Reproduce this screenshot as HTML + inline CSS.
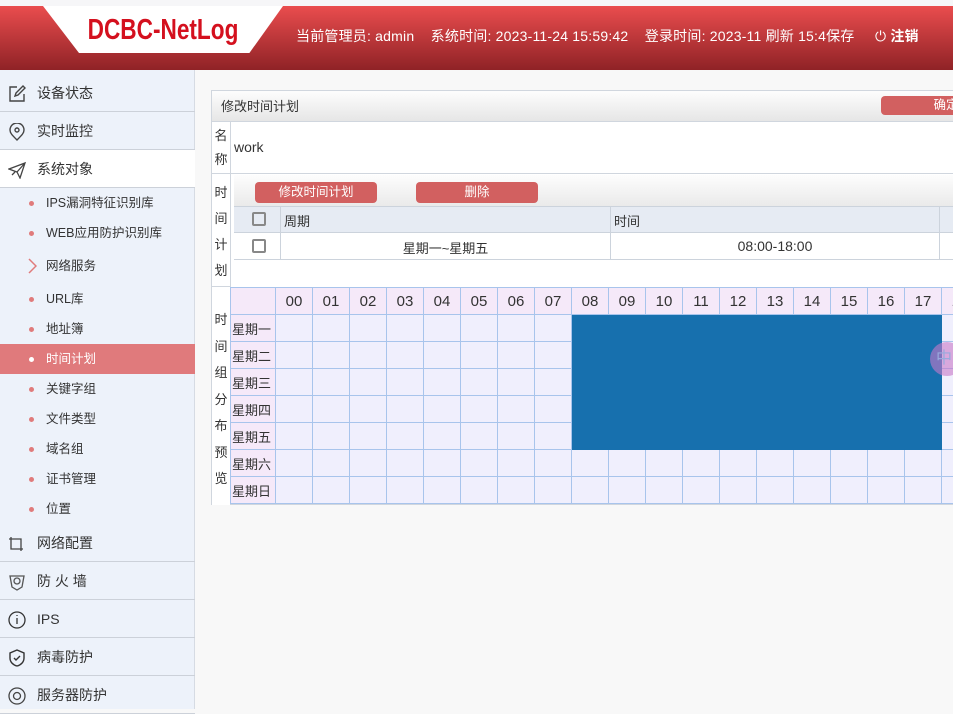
<!DOCTYPE html>
<html><head><meta charset="utf-8"><style>
*{margin:0;padding:0;box-sizing:border-box}
body{width:953px;height:709px;overflow:hidden;position:relative;background:#f8f8f8;font-family:"Liberation Sans","Noto Sans CJK SC",sans-serif;font-size:13px;color:#333}
.top{position:absolute;left:0;top:0;width:953px;height:6px;background:#f6f6f8}
.hdr{position:absolute;left:0;top:6px;width:953px;height:64px;background:linear-gradient(#ea4d4e,#8f2226)}
.logo{position:absolute;left:43px;top:0;width:240px;height:47px;background:#fff;clip-path:polygon(0 0,100% 0,86% 100%,15% 100%)}
.logo span{position:absolute;left:0;width:240px;top:9px;text-align:center;color:#d4101e;font-weight:bold;font-size:29px;line-height:30px;white-space:nowrap;transform:scaleX(.78);font-family:"Liberation Sans Narrow","Liberation Sans",sans-serif}
.hinfo{position:absolute;top:20px;left:296px;color:#fff;font-size:14px;white-space:nowrap;letter-spacing:.2px}
.side{position:absolute;left:0;top:70px;width:195px;height:639px;background:#edf2fa;border-right:1px solid #d6dbe3}
.m{position:absolute;left:0;width:195px;height:38px;border-bottom:1px solid #ccd1d9;font-size:14px;line-height:38px;padding-left:37px}
.m svg{position:absolute;left:8px;top:11px}
.s{position:absolute;left:0;width:195px;height:30px;line-height:30px;padding-left:46px;font-size:12.5px}
.s:before{content:"";position:absolute;left:29px;top:13px;width:5px;height:5px;border-radius:50%;background:#e07b7b}
.s.act{background:#e07a7c;color:#fff}
.s.act:before{background:#fff}
.s.nd:before{display:none}
.panel{position:absolute;left:211px;top:90px;width:760px;height:415px;border:1px solid #d0d6de;background:#fff}
.ttl{height:31px;background:linear-gradient(#fdfdfd,#e6e6e6);line-height:31px;padding-left:9px;border-bottom:1px solid #d0d6de}
.btn{position:absolute;background:#d26060;color:#fff;border-radius:4px;text-align:center;font-size:12.5px}
.lbl{position:absolute;left:0;width:19px;border-right:1px solid #d0d6de;text-align:center;font-size:13px;line-height:25px;background:#fff}
table{border-collapse:collapse;position:absolute;table-layout:fixed;width:748px}
.g td,.g th{border:1px solid #a8c4ec;width:37px;height:27px;background:#f0effd;font-weight:normal;text-align:center;font-size:15px}
.g th{background:#f5e9f9}
.g th.d{width:45px;font-size:13px;text-align:left;padding-left:1px}
.g td.b{background:#1770ae;border-color:#1770ae}
</style></head><body>
<div class="top"></div>
<div class="hdr"><div class="logo"><span>DCBC-NetLog</span></div>
<div class="hinfo">当前管理员: admin&nbsp;&nbsp;&nbsp;&nbsp;系统时间: 2023-11-24 15:59:42&nbsp;&nbsp;&nbsp;&nbsp;登录时间: 2023-11 刷新 15:4保存&nbsp;&nbsp;&nbsp;&nbsp;&nbsp;⏻ <b>注销</b></div></div>
<div class="side">
<div class="m" style="top:4px"><svg width="18" height="18" viewBox="0 0 18 18" fill="none" stroke="#444" stroke-width="1.4"><path d="M9 2H2v14h14V9M7 11l1-3 7-7 2 2-7 7z"/></svg>设备状态</div>
<div class="m" style="top:42px"><svg width="18" height="18" viewBox="0 0 18 18" fill="none" stroke="#444" stroke-width="1.4"><path d="M9 17C4 12 2 10 2 7a7 7 0 0 1 14 0c0 3-2 5-7 10z"/><circle cx="9" cy="7" r="2"/></svg>实时监控</div>
<div class="m" style="top:80px;background:#fff"><svg width="18" height="18" viewBox="0 0 18 18" fill="none" stroke="#444" stroke-width="1.3"><path d="M1 8l16-6-5 15-3-6zM9 11l8-9M4 14l3-3"/></svg>系统对象</div>
<div class="s" style="top:118px">IPS漏洞特征识别库</div>
<div class="s" style="top:148px">WEB应用防护识别库</div>
<div class="s nd" style="top:181px;">网络服务</div>
<div class="s" style="top:214px">URL库</div>
<div class="s" style="top:244px">地址簿</div>
<div class="s act" style="top:274px">时间计划</div>
<div class="s" style="top:304px">关键字组</div>
<div class="s" style="top:334px">文件类型</div>
<div class="s" style="top:364px">域名组</div>
<div class="s" style="top:394px">证书管理</div>
<div class="s" style="top:424px">位置</div>
<div class="m" style="top:454px;border-top:0"><svg width="18" height="18" viewBox="0 0 18 18" fill="none" stroke="#444" stroke-width="1.3"><path d="M3 2v12h12M1 4h12v12"/></svg>网络配置</div>
<div class="m" style="top:492px"><svg width="18" height="18" viewBox="0 0 18 18" fill="none" stroke="#555" stroke-width="1.3"><path d="M2 3h14l-2 11-5 3-5-3z"/><circle cx="9" cy="8" r="3"/></svg>防 火 墙</div>
<div class="m" style="top:530px"><svg width="18" height="18" viewBox="0 0 18 18" fill="none" stroke="#333" stroke-width="1.3"><circle cx="9" cy="9" r="8"/><path d="M9 7v6M9 4v1"/></svg>IPS</div>
<div class="m" style="top:568px"><svg width="18" height="18" viewBox="0 0 18 18" fill="none" stroke="#333" stroke-width="1.4"><path d="M9 1l7 3v5c0 4-3 7-7 8-4-1-7-4-7-8V4zM6 9l2 2 4-4"/></svg>病毒防护</div>
<div class="m" style="top:606px"><svg width="18" height="18" viewBox="0 0 18 18" fill="none" stroke="#444" stroke-width="1.3"><circle cx="9" cy="9" r="8"/><circle cx="9" cy="9" r="3.5"/></svg>服务器防护</div>
</div>
<svg style="position:absolute;left:27px;top:258px" width="10" height="16" viewBox="0 0 10 16" fill="none" stroke="#e07b7b" stroke-width="1.5"><path d="M2 1l7 7-7 7"/></svg>
<div class="panel">
<div class="ttl">修改时间计划</div>
<div class="btn" style="left:669px;top:5px;width:90px;height:19px;line-height:19px;padding-left:40px">确定</div>
<div class="lbl" style="top:31px;height:52px;line-height:24px;padding-top:2px;border-bottom:1px solid #d0d6de">名<br>称</div>
<div style="position:absolute;left:22px;top:48px;font-size:14px">work</div>
<div style="position:absolute;left:19px;top:82px;width:741px;height:1px;background:#d0d6de"></div>
<div class="lbl" style="top:83px;height:113px;padding-top:6px;line-height:26px;border-bottom:1px solid #d0d6de">时<br>间<br>计<br>划</div>
<div style="position:absolute;left:22px;top:84px;width:738px;height:31px;background:linear-gradient(#fdfdfd,#eaeaea)"></div>
<div class="btn" style="left:43px;top:91px;width:122px;height:21px;line-height:21px">修改时间计划</div>
<div class="btn" style="left:204px;top:91px;width:122px;height:21px;line-height:21px">删除</div>
<div style="position:absolute;left:22px;top:115px;width:738px;height:27px;background:#e6ebf3;border-top:1px solid #ccd3dc;border-bottom:1px solid #ccd3dc"></div>
<div style="position:absolute;left:22px;top:142px;width:738px;height:27px;border-bottom:1px solid #ccd3dc"></div>
<div style="position:absolute;left:68px;top:115px;width:1px;height:54px;background:#ccd3dc"></div>
<div style="position:absolute;left:398px;top:115px;width:1px;height:54px;background:#ccd3dc"></div>
<div style="position:absolute;left:727px;top:115px;width:1px;height:54px;background:#ccd3dc"></div>
<div style="position:absolute;left:40px;top:121px;width:14px;height:14px;border:2px solid #888;border-radius:2px"></div>
<div style="position:absolute;left:40px;top:148px;width:14px;height:14px;border:2px solid #888;border-radius:2px"></div>
<div style="position:absolute;left:72px;top:120px;font-size:13px">周期</div>
<div style="position:absolute;left:402px;top:120px;font-size:13px">时间</div>
<div style="position:absolute;left:69px;top:147px;width:329px;text-align:center;font-size:13px">星期一~星期五</div>
<div style="position:absolute;left:399px;top:147px;width:328px;text-align:center;font-size:14px">08:00-18:00</div>
<div class="lbl" style="top:196px;height:218px;padding-top:20px;line-height:26.5px">时<br>间<br>组<br>分<br>布<br>预<br>览</div>
<table class="g" style="left:18px;top:196px">
<colgroup><col style="width:45px"><col span="19" style="width:37px"></colgroup>
<tr><th class="d"></th><th>00</th><th>01</th><th>02</th><th>03</th><th>04</th><th>05</th><th>06</th><th>07</th><th>08</th><th>09</th><th>10</th><th>11</th><th>12</th><th>13</th><th>14</th><th>15</th><th>16</th><th>17</th><th>18</th></tr>
<tr><th class="d">星期一</th><td></td><td></td><td></td><td></td><td></td><td></td><td></td><td></td><td class="b"></td><td class="b"></td><td class="b"></td><td class="b"></td><td class="b"></td><td class="b"></td><td class="b"></td><td class="b"></td><td class="b"></td><td class="b"></td><td></td></tr>
<tr><th class="d">星期二</th><td></td><td></td><td></td><td></td><td></td><td></td><td></td><td></td><td class="b"></td><td class="b"></td><td class="b"></td><td class="b"></td><td class="b"></td><td class="b"></td><td class="b"></td><td class="b"></td><td class="b"></td><td class="b"></td><td></td></tr>
<tr><th class="d">星期三</th><td></td><td></td><td></td><td></td><td></td><td></td><td></td><td></td><td class="b"></td><td class="b"></td><td class="b"></td><td class="b"></td><td class="b"></td><td class="b"></td><td class="b"></td><td class="b"></td><td class="b"></td><td class="b"></td><td></td></tr>
<tr><th class="d">星期四</th><td></td><td></td><td></td><td></td><td></td><td></td><td></td><td></td><td class="b"></td><td class="b"></td><td class="b"></td><td class="b"></td><td class="b"></td><td class="b"></td><td class="b"></td><td class="b"></td><td class="b"></td><td class="b"></td><td></td></tr>
<tr><th class="d">星期五</th><td></td><td></td><td></td><td></td><td></td><td></td><td></td><td></td><td class="b"></td><td class="b"></td><td class="b"></td><td class="b"></td><td class="b"></td><td class="b"></td><td class="b"></td><td class="b"></td><td class="b"></td><td class="b"></td><td></td></tr>
<tr><th class="d">星期六</th><td></td><td></td><td></td><td></td><td></td><td></td><td></td><td></td><td></td><td></td><td></td><td></td><td></td><td></td><td></td><td></td><td></td><td></td><td></td></tr>
<tr><th class="d">星期日</th><td></td><td></td><td></td><td></td><td></td><td></td><td></td><td></td><td></td><td></td><td></td><td></td><td></td><td></td><td></td><td></td><td></td><td></td><td></td></tr>
</table>
</div>
<div style="position:absolute;left:930px;top:342px;width:34px;height:34px;border-radius:50%;background:rgba(200,120,200,.6);color:#9ad;font-size:16px;line-height:34px;padding-left:6px">中</div>
</body></html>
